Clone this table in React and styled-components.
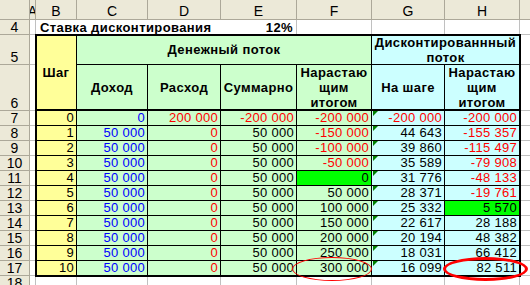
import React from 'react';
import styled, { createGlobalStyle, css } from 'styled-components';

const GlobalStyle = createGlobalStyle`
  html,
  body {
    margin: 0;
    padding: 0;
    background: #fff;
  }
  body {
    overflow: hidden;
  }
`;

const GRID = '#c0c0c0';
const YELLOW = '#ffff99';
const GREEN = '#ccffcc';
const CYAN = '#ccffff';
const LIME = '#00ff00';

// every part of the sheet sits on a spreadsheet grid line
const place = css`
  grid-row: ${(p) => p.$r} / span ${(p) => p.$rs || 1};
  grid-column: ${(p) => p.$c} / span ${(p) => p.$cs || 1};
  min-width: 0;
  box-sizing: border-box;
`;

const Sheet = styled.div`
  position: relative;
  display: grid;
  grid-template-columns: 30px 6px 41px 71px 73px 76px 75px 73px 75px 1fr;
  grid-template-rows: 20px 15px 30px 46px repeat(12, 15px);
  width: 530px;
  height: 285px;
  overflow: hidden;
  font-family: 'Liberation Sans', Arial, sans-serif;
  color: #000;
`;

const Heading = styled.div`
  ${place};
  display: flex;
  justify-content: center;
  align-items: flex-end;
  padding-bottom: ${(p) => (p.$side ? 0 : 1)}px;
  overflow: hidden;
  background: #ece9d8;
  border-right: ${(p) => (p.$open ? 'none' : '1px solid #aca899')};
  border-bottom: 1px solid #aca899;
  font-size: 14px;
  line-height: 13px;
`;

const Blank = styled.div`
  ${place};
  border-right: ${(p) => (p.$open ? 'none' : `1px solid ${GRID}`)};
  border-bottom: 1px solid ${GRID};
`;

const Label = styled.div`
  ${place};
  display: flex;
  align-items: flex-end;
  justify-content: ${(p) => (p.$right ? 'flex-end' : 'flex-start')};
  padding: ${(p) => (p.$right ? '0 3px 0 0' : '0 0 0 4px')};
  border-right: ${(p) => (p.$right ? `1px solid ${GRID}` : 'none')};
  border-bottom: 1px solid ${GRID};
  font-size: 13px;
  font-weight: 700;
  line-height: 13px;
  letter-spacing: 0.4px;
  white-space: nowrap;
`;

const Title = styled.div`
  ${place};
  display: flex;
  align-items: center;
  justify-content: center;
  background: ${(p) => p.$bg};
  border-right: 1px solid #000;
  border-bottom: ${(p) => (p.$thick ? 2 : 1)}px solid #000;
  font-size: 13px;
  font-weight: 700;
  line-height: 15px;
  letter-spacing: 0.4px;
  text-align: center;
  white-space: nowrap;
`;

const Value = styled.div`
  ${place};
  position: relative;
  display: flex;
  align-items: flex-end;
  justify-content: flex-end;
  padding-right: 2px;
  background: ${(p) => p.$bg};
  color: ${(p) => p.$ink};
  border-right: 1px solid #000;
  border-bottom: 1px solid #000;
  font-size: 13px;
  line-height: 14px;
  letter-spacing: 0.3px;
  white-space: nowrap;

  ${(p) =>
    p.$flag &&
    css`
      &::before {
        content: '';
        position: absolute;
        left: 1px;
        top: 0;
        border-top: 5px solid #008000;
        border-right: 5px solid transparent;
      }
    `}
`;

const Frame = styled.div`
  grid-row: 3 / 16;
  grid-column: 3 / 10;
  margin: -1px;
  border: 2px solid #000;
  z-index: 2;
  pointer-events: none;
`;

const Ring = styled.span`
  position: absolute;
  left: ${(p) => p.$x}px;
  top: -4px;
  width: ${(p) => p.$w}px;
  height: 24px;
  box-sizing: border-box;
  border: ${(p) => p.$weight}px solid #ff0000;
  border-radius: 50%;
  z-index: 3;
  pointer-events: none;
`;

const LETTERS = ['A', 'B', 'C', 'D', 'E', 'F', 'G', 'H'];

const steps = [
  ['0', '0', '200 000', '-200 000', '-200 000', '-200 000', '-200 000'],
  ['1', '50 000', '0', '50 000', '-150 000', '44 643', '-155 357'],
  ['2', '50 000', '0', '50 000', '-100 000', '39 860', '-115 497'],
  ['3', '50 000', '0', '50 000', '-50 000', '35 589', '-79 908'],
  ['4', '50 000', '0', '50 000', '0', '31 776', '-48 133'],
  ['5', '50 000', '0', '50 000', '50 000', '28 371', '-19 761'],
  ['6', '50 000', '0', '50 000', '100 000', '25 332', '5 570'],
  ['7', '50 000', '0', '50 000', '150 000', '22 617', '28 188'],
  ['8', '50 000', '0', '50 000', '200 000', '20 194', '48 382'],
  ['9', '50 000', '0', '50 000', '250 000', '18 031', '66 412'],
  ['10', '50 000', '0', '50 000', '300 000', '16 099', '82 511'],
];

// [row, column] of cells painted bright green
const hits = ['4:4', '6:6'];
const rings = {
  '10:4': { x: -5, w: 80, weight: 1 },
  '10:6': { x: -2, w: 85, weight: 3 },
};

const fillOf = (i) => (i === 0 ? YELLOW : i < 5 ? GREEN : CYAN);
const inkOf = (i, v) => {
  if (i === 1) return '#0000ff';
  if (i === 2 || v.startsWith('-')) return '#ff0000';
  return '#000';
};

const Hdr = ({ children }) =>
  children.split('/').map((line, i) => (
    <React.Fragment key={line}>
      {i > 0 && <br />}
      {line}
    </React.Fragment>
  ));

const App = () => (
  <>
    <GlobalStyle />
    <Sheet>
      <Heading $r={1} $c={1} />
      {LETTERS.map((l, i) => (
        <Heading key={l} $r={1} $c={i + 2}>
          {l}
        </Heading>
      ))}
      <Heading $r={1} $c={10} $open />

      <Heading $r={2} $c={1} $side>
        4
      </Heading>
      <Blank $r={2} $c={2} />
      <Label $r={2} $c={3} $cs={3}>
        Ставка дисконтирования
      </Label>
      <Label $r={2} $c={6} $right>
        12%
      </Label>
      <Blank $r={2} $c={7} />
      <Blank $r={2} $c={8} />
      <Blank $r={2} $c={9} />
      <Blank $r={2} $c={10} $open />

      <Heading $r={3} $c={1} $side>
        5
      </Heading>
      <Blank $r={3} $c={2} />
      <Title $r={3} $c={3} $rs={2} $bg={YELLOW} $thick>
        Шаг
      </Title>
      <Title $r={3} $c={4} $cs={4} $bg={GREEN}>
        Денежный поток
      </Title>
      <Title $r={3} $c={8} $cs={2} $bg={CYAN}>
        <Hdr>Дисконтированнный/поток</Hdr>
      </Title>
      <Blank $r={3} $c={10} $open />

      <Heading $r={4} $c={1} $side>
        6
      </Heading>
      <Blank $r={4} $c={2} />
      {['Доход', 'Расход', 'Суммарно', 'Нарастаю/щим/итогом', 'На шаге', 'Нарастаю/щим/итогом'].map(
        (t, i) => (
          <Title key={i} $r={4} $c={i + 4} $bg={i < 4 ? GREEN : CYAN} $thick>
            <Hdr>{t}</Hdr>
          </Title>
        ),
      )}
      <Blank $r={4} $c={10} $open />

      {steps.map((row, r) => (
        <React.Fragment key={r}>
          <Heading $r={r + 5} $c={1} $side>
            {r + 7}
          </Heading>
          <Blank $r={r + 5} $c={2} />
          {row.map((v, i) => {
            const ring = rings[`${r}:${i}`];
            return (
              <Value
                key={i}
                $r={r + 5}
                $c={i + 3}
                $bg={hits.includes(`${r}:${i}`) ? LIME : fillOf(i)}
                $ink={inkOf(i, v)}
                $flag={i === 5}
              >
                {v}
                {ring && <Ring $x={ring.x} $w={ring.w} $weight={ring.weight} />}
              </Value>
            );
          })}
          <Blank $r={r + 5} $c={10} $open />
        </React.Fragment>
      ))}

      <Heading $r={16} $c={1} $side>
        18
      </Heading>
      {[2, 3, 4, 5, 6, 7, 8, 9].map((c) => (
        <Blank key={c} $r={16} $c={c} />
      ))}
      <Blank $r={16} $c={10} $open />

      <Frame />
    </Sheet>
  </>
);

export default App;
